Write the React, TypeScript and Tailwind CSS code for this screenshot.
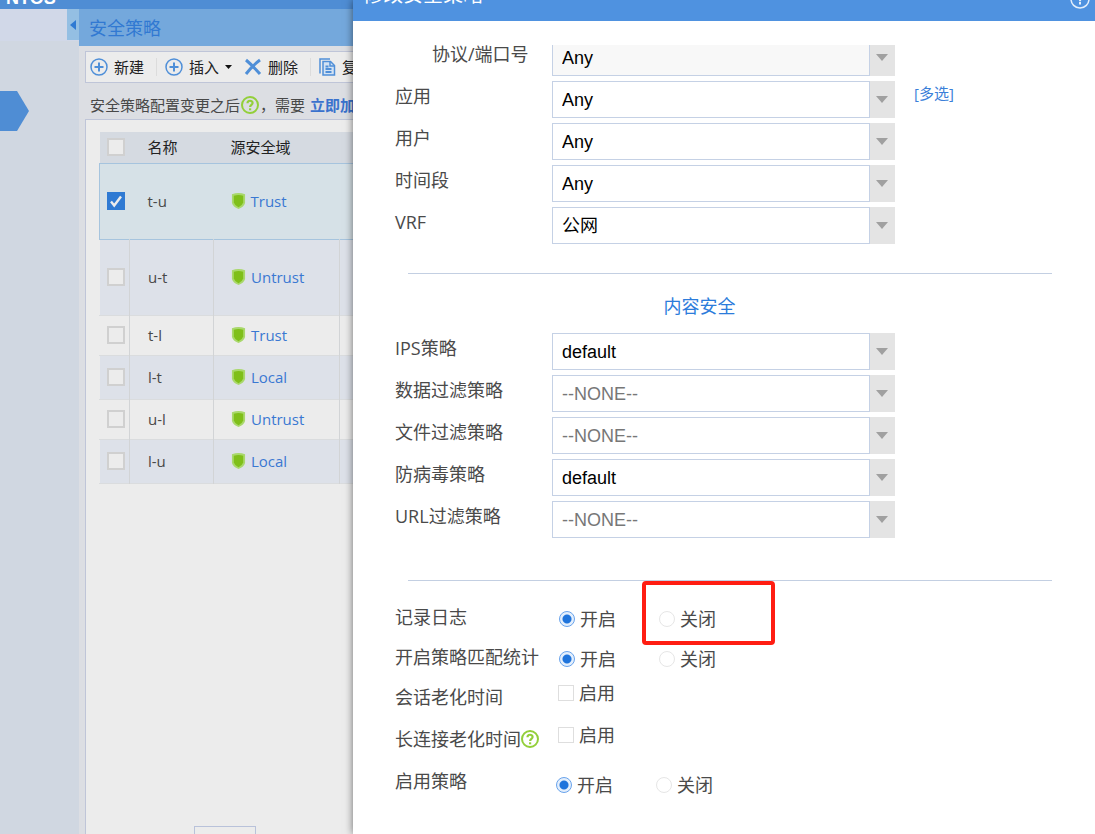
import { useState } from 'react'
import type { ReactNode } from 'react'

const zones = [
  { name: 't-u', zone: 'Trust', height: 'h-[76px]' },
  { name: 'u-t', zone: 'Untrust', height: 'h-[76px]' },
  { name: 't-l', zone: 'Trust', height: 'h-10' },
  { name: 'l-t', zone: 'Local', height: 'h-11' },
  { name: 'u-l', zone: 'Untrust', height: 'h-10' },
  { name: 'l-u', zone: 'Local', height: 'h-11' },
]

const matchFields = [
  { label: '应用', value: 'Any', multi: true },
  { label: '用户', value: 'Any' },
  { label: '时间段', value: 'Any' },
  { label: 'VRF', value: '公网' },
]

const contentFields = [
  { label: 'IPS策略', value: 'default' },
  { label: '数据过滤策略', value: '--NONE--' },
  { label: '文件过滤策略', value: '--NONE--' },
  { label: '防病毒策略', value: 'default' },
  { label: 'URL过滤策略', value: '--NONE--' },
]

function PlusIcon() {
  return (
    <svg width="18" height="18" viewBox="0 0 18 18" fill="none" stroke="#4f8fd8">
      <circle cx="9" cy="9" r="8" strokeWidth="1.5" />
      <path d="M9 4.5v9M4.5 9h9" strokeWidth="2" />
    </svg>
  )
}

function DeleteIcon() {
  return (
    <svg width="18" height="18" viewBox="0 0 18 18" fill="none" stroke="#4f8fd8" strokeWidth="3">
      <path d="M2 2Q8 7 16 16M16 2Q9 7 2 16" />
    </svg>
  )
}

function CopyIcon() {
  return (
    <svg width="17" height="18" viewBox="0 0 17 18" fill="none" stroke="#4f8fd8" strokeWidth="1.5">
      <path d="M1 15.500V1h10" />
      <path d="M4 3.500h7.500l4 4V17H4z" fill="#d3e2f3" />
      <path d="M11 3.500v4.500h4.500" />
      <path d="M6.500 8.500h3M6.500 11h6M6.500 14h6" strokeWidth="1.800" />
    </svg>
  )
}

function HelpIcon() {
  return (
    <svg className="shrink-0" width="18" height="18" viewBox="0 0 18 18" fill="none" stroke="#93cf3a">
      <circle cx="9" cy="9" r="8" strokeWidth="2" />
      <path d="M6.500 7.200C6.500 3.900 11.600 4 11.600 7c0 1.800-2.500 2-2.500 4" strokeWidth="2.200" />
      <path d="M9.100 12.300v2" strokeWidth="2.200" />
    </svg>
  )
}

function Shield() {
  return (
    <svg width="15" height="18" viewBox="0 0 16 18">
      <path d="M1 1.700Q8-.6 15 1.700V11q-1 4-7 6.500Q2 15 1 11z" fill="#a9d86b" />
      <path d="M3 3.300Q8 1.800 13 3.300v7.200q-.8 3-5 5.100-4.200-2.100-5-5.100z" fill="#7fbf1a" />
    </svg>
  )
}

function ToolButton({ icon, children }: { icon: ReactNode; children: ReactNode }) {
  return (
    <button className="flex shrink-0 items-center gap-1.5 whitespace-nowrap text-[#222]">
      {icon}
      {children}
    </button>
  )
}

function TableCheck({ label, checked, onChange }: { label: string; checked: boolean; onChange: () => void }) {
  return (
    <span className="grid h-[18px] w-[18px]">
      <input
        type="checkbox"
        aria-label={label}
        checked={checked}
        onChange={onChange}
        className="col-start-1 row-start-1 h-[18px] w-[18px] appearance-none border-2 border-[#d0d0d0] bg-[#ececec] checked:border-[#2f7ad3] checked:bg-[#2f7ad3]"
      />
      {checked && (
        <svg className="pointer-events-none col-start-1 row-start-1" width="18" height="18" viewBox="0 0 18 18" fill="none">
          <path d="M4 9.500l3.200 4L14 4.500" stroke="#ececec" strokeWidth="2.400" />
        </svg>
      )}
    </span>
  )
}

function SelectBox({ id, value, muted }: { id: string; value: string; muted?: boolean }) {
  const color = value === '--NONE--' ? 'text-[#777]' : 'text-black'
  return (
    <div className="grid h-[37px] w-[343px] shrink-0">
      <select
        id={id}
        defaultValue={value}
        className={`col-start-1 row-start-1 w-[318px] appearance-none border border-[#c5d1e5] pl-[9px] font-['Liberation_Sans','Noto_Sans_CJK_SC',sans-serif] text-lg leading-6 ${muted ? 'bg-[#f8f8f8]' : 'bg-white'} ${color}`}
      >
        <option>{value}</option>
      </select>
      <span className="pointer-events-none col-start-1 row-start-1 flex w-[25px] items-center justify-self-end bg-[#e4e4e4] pl-1.5">
        <svg width="12" height="7" viewBox="0 0 12 7">
          <path d="M0 0h12L6 7z" fill="#a0a0a0" />
        </svg>
      </span>
    </div>
  )
}

function FieldRow({ id, label, value, multi }: { id: string; label: string; value: string; multi?: boolean }) {
  return (
    <div className="flex">
      <label htmlFor={id} className="w-[157px] shrink-0 leading-[30px]">
        {label}
      </label>
      <SelectBox id={id} value={value} />
      {multi && (
        <a href="#multi" className="ml-[19px] text-[15px] leading-6 text-[#3b7fd9]">
          [多选]
        </a>
      )}
    </div>
  )
}

function Radio({ name, label, checked }: { name: string; label: string; checked?: boolean }) {
  return (
    <label className="flex w-[100px] items-center gap-[5px]">
      <input
        type="radio"
        name={name}
        defaultChecked={checked}
        className="h-4 w-4 appearance-none rounded-full border border-[#e6e6e6] bg-white checked:border-[#68a3ec] checked:bg-[radial-gradient(circle,#1f74dc_0_4px,#e4effc_5px)]"
      />
      {label}
    </label>
  )
}

function Check({ label }: { label: string }) {
  return (
    <label className="flex items-center gap-[5px] self-start leading-7">
      <input type="checkbox" className="h-4 w-4 appearance-none border border-[#dedede] bg-white" />
      {label}
    </label>
  )
}

function PolicyPage() {
  const [selected, setSelected] = useState(['t-u'])

  const toggle = (name: string) => {
    setSelected(selected.includes(name) ? selected.filter((n) => n !== name) : [...selected, name])
  }

  return (
    <div className="flex w-[353px] shrink-0 flex-col overflow-hidden bg-[#dcdee3] text-[15px] text-[#484848]">
      <header className="flex h-[9px] shrink-0 items-end overflow-hidden bg-[#4f8dd4] pl-1.5 text-white">
        <span className="pb-px font-['Liberation_Sans',sans-serif] text-lg leading-5 font-bold">NTOS</span>
      </header>
      <div className="flex grow">
        <nav className="flex w-[79px] shrink-0 flex-col bg-[#d0d7e1]">
          <div className="flex h-8 justify-end bg-[#d1d8e8]">
            <button aria-label="收起" className="flex h-[31px] w-3 items-center justify-center bg-[#94bfe3]">
              <svg width="6" height="10" viewBox="0 0 6 10">
                <path d="M6 0v10L0 5z" fill="#2f7ad3" />
              </svg>
            </button>
          </div>
          <svg className="mt-[50px]" width="30" height="40" viewBox="0 0 30 40">
            <path d="M0 0h17l12 20-12 20H0z" fill="#4f8dd4" />
          </svg>
        </nav>
        <main className="flex w-[600px] shrink-0 flex-col">
          <h1 className="h-[37px] bg-[#74a8dc] pl-[10px] text-lg leading-[38px] text-[#3179d2]">安全策略</h1>
          <div className="mt-[5px] ml-1.5 flex h-8 shrink-0 items-center border border-[#bfc5d8] bg-[#ececec] pl-1">
            <ToolButton icon={<PlusIcon />}>新建</ToolButton>
            <i className="mr-2 ml-3 h-[18px] w-px bg-[#dcdcdc]" />
            <ToolButton icon={<PlusIcon />}>
              插入
              <svg width="7" height="4" viewBox="0 0 7 4">
                <path d="M0 0h7L3.500 4z" fill="#111" />
              </svg>
            </ToolButton>
            <span className="w-3" />
            <ToolButton icon={<DeleteIcon />}>删除</ToolButton>
            <i className="mx-2 ml-3 h-[18px] w-px bg-[#dcdcdc]" />
            <ToolButton icon={<CopyIcon />}>复制</ToolButton>
          </div>
          <p className="flex h-9 shrink-0 items-center gap-px pt-2 pl-[11px] whitespace-nowrap">
            安全策略配置变更之后
            <HelpIcon />
            ，需要&nbsp;
            <a href="#speed" className="font-bold text-[#3a72cd]">
              立即加速
            </a>
          </p>
          <section className="ml-1.5 flex grow flex-col border border-b-0 border-[#bfc5d8] bg-[#ececec] pt-3 pl-[13px]">
            <table className="w-[500px] table-fixed border-collapse text-left">
              <thead>
                <tr className="h-[31px] bg-[#d5dae1] text-[#222]">
                  <th className="w-[30px] pl-[7px]">
                    <TableCheck label="全选" checked={false} onChange={() => setSelected(zones.map((z) => z.name))} />
                  </th>
                  <th className="w-21 pl-[18px] font-normal">名称</th>
                  <th className="w-[126px] pl-[17px] font-normal">源安全域</th>
                  <th />
                </tr>
              </thead>
              <tbody>
                {zones.map((row) => {
                  const on = selected.includes(row.name)
                  const line = on ? '' : 'border-r border-[#d2d4d6]'
                  return (
                    <tr
                      key={row.name}
                      className={`${row.height} border ${on ? 'border-[#a6c4de] bg-[#d6e1e7]' : 'border-x-transparent border-y-[#dadcde] even:bg-[#dde1e9]'}`}
                    >
                      <td className={`pl-[7px] ${line}`}>
                        <TableCheck label={row.name} checked={on} onChange={() => toggle(row.name)} />
                      </td>
                      <td className={`pl-[18px] ${line}`}>{row.name}</td>
                      <td className={`pl-[17px] ${line}`}>
                        <span className="flex items-center gap-[5px]">
                          <Shield />
                          <a href="#zone" className="text-[#3a78d2]">
                            {row.zone}
                          </a>
                        </span>
                      </td>
                      <td />
                    </tr>
                  )
                })}
              </tbody>
            </table>
            <div className="mt-auto ml-[95px] h-2 w-[62px] border border-b-0 border-[#b9c2da]" />
          </section>
        </main>
      </div>
    </div>
  )
}

function PolicyDialog() {
  return (
    <div className="z-10 flex min-w-0 grow flex-col bg-white text-lg text-[#4a4a4a] shadow-[0_0_8px_rgba(0,0,0,0.55)]">
      <header className="flex h-[21px] shrink-0 items-end justify-between overflow-hidden bg-[#4f92e0] pr-[5px] pl-[10px] text-white">
        <h2 className="pb-3 text-xl leading-7">修改安全策略</h2>
        <button aria-label="帮助" className="pb-3">
          <svg width="20" height="20" viewBox="0 0 20 20" fill="none" stroke="#e3eefb">
            <circle cx="10" cy="10" r="9" strokeWidth="1.500" />
            <path d="M7.500 8c0-4 5-3.500 5-.8 0 1.800-2.500 2-2.500 5M10 13v2.500" strokeWidth="2" />
          </svg>
        </button>
      </header>
      <form className="mt-6 flex grow flex-col overflow-hidden">
        <div className="-mt-1.5 flex">
          <label htmlFor="port" className="w-[199px] shrink-0 pl-[79px] leading-[30px]">
            协议/端口号
          </label>
          <SelectBox id="port" value="Any" muted />
        </div>
        <div className="mt-[5px] flex flex-col gap-[5px] pl-[42px]">
          {matchFields.map((f) => (
            <FieldRow key={f.label} id={f.label} {...f} />
          ))}
        </div>
        <hr className="mt-[29px] mr-[43px] ml-[55px] border-[#c3cfe2]" />
        <h3 className="mt-[18px] pr-[49px] text-center leading-7 text-[#2c7cdb]">内容安全</h3>
        <div className="mt-[13px] flex flex-col gap-[5px] pl-[42px]">
          {contentFields.map((f) => (
            <FieldRow key={f.label} id={f.label} {...f} />
          ))}
        </div>
        <hr className="mt-[42px] mr-[43px] ml-[55px] border-[#c3cfe2]" />
        <div className="relative mt-[18px] flex flex-col pl-[42px] leading-9">
          <div className="flex h-10">
            <span className="w-[164px]">记录日志</span>
            <Radio name="log" label="开启" checked />
            <Radio name="log" label="关闭" />
          </div>
          <div className="flex h-10">
            <span className="w-[164px]">开启策略匹配统计</span>
            <Radio name="stat" label="开启" checked />
            <Radio name="stat" label="关闭" />
          </div>
          <div className="flex h-[42px]">
            <span className="w-[163px]">会话老化时间</span>
            <Check label="启用" />
          </div>
          <div className="flex h-[42px]">
            <span className="flex w-[163px] items-center self-start">
              长连接老化时间
              <HelpIcon />
            </span>
            <Check label="启用" />
          </div>
          <div className="flex h-11">
            <span className="w-[161px]">启用策略</span>
            <Radio name="enable" label="开启" checked />
            <Radio name="enable" label="关闭" />
          </div>
          <div className="pointer-events-none absolute -top-[18px] left-[289px] h-16 w-[133px] rounded-sm border-4 border-[#ff1d12]" />
        </div>
      </form>
    </div>
  )
}

export default function App() {
  return (
    <div className="flex h-screen overflow-hidden font-['Open_Sans','Noto_Sans_CJK_SC',sans-serif]">
      <PolicyPage />
      <PolicyDialog />
    </div>
  )
}
